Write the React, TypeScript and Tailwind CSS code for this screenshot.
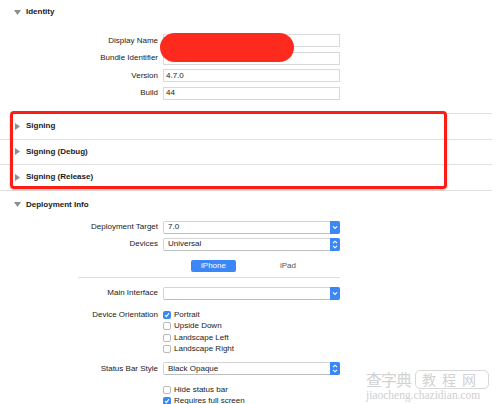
import type { ReactNode } from "react";

const font = { fontFamily: '"Liberation Sans", Arial, sans-serif' };

const Triangle = ({ open }: { open: boolean }) =>
  open ? (
    <svg width="7" height="5" viewBox="0 0 7 5" className="shrink-0">
      <path d="M0 0 L7 0 L3.5 5 Z" fill="#8e8e8e" />
    </svg>
  ) : (
    <svg width="5" height="7" viewBox="0 0 5 7" className="shrink-0">
      <path d="M0 0 L5 3.5 L0 7 Z" fill="#8e8e8e" />
    </svg>
  );

const SectionHeader = ({ title, open, className = "" }: { title: string; open: boolean; className?: string }) => (
  <div className={`flex items-center pl-[14px] gap-[5px] ${className}`}>
    <div className="w-[7px] flex justify-center">
      <Triangle open={open} />
    </div>
    <span className="font-bold text-[8px] text-[#1a1a1a]">{title}</span>
  </div>
);

const Row = ({ label, children, className = "" }: { label?: string; children: ReactNode; className?: string }) => (
  <div className={`flex items-center ${className}`}>
    <div className="w-[158px] text-right text-[8px] text-[#222] leading-none">{label}</div>
    <div className="ml-[5px] flex items-center">{children}</div>
  </div>
);

const TextField = ({ value }: { value: string }) => (
  <div className="w-[177px] h-[13px] border border-[#d9d9d9] bg-white flex items-center pl-[2px] text-[8px] text-[#222]">
    {value}
  </div>
);

const Popup = ({ value, stepper }: { value: string; stepper?: boolean }) => (
  <div className="w-[177px] h-[13px] border border-[#d4d4d4] border-b-[#bdbdbd] rounded-[2px] bg-white flex items-center text-[8px] text-[#222]">
    <span className="flex-1 pl-[4px]">{value}</span>
    <div className="w-[10px] h-[13px] -mr-px -my-px bg-[#3a87f5] rounded-r-[2px] flex items-center justify-center">
      {stepper ? (
        <svg width="6" height="9" viewBox="0 0 6 9">
          <path d="M1 3.2 L3 1.2 L5 3.2 M1 5.8 L3 7.8 L5 5.8" fill="none" stroke="white" strokeWidth="1.1" />
        </svg>
      ) : (
        <svg width="6" height="5" viewBox="0 0 6 5">
          <path d="M1 1.3 L3 3.3 L5 1.3" fill="none" stroke="white" strokeWidth="1.2" />
        </svg>
      )}
    </div>
  </div>
);

const Check = ({ label, checked }: { label: string; checked?: boolean }) => (
  <div className="h-[11.5px] flex items-center gap-[3px] text-[8px] text-[#222]">
    {checked ? (
      <div className="w-[8px] h-[8px] rounded-[2px] bg-[#3a87f5] flex items-center justify-center">
        <svg width="6" height="6" viewBox="0 0 6 6">
          <path d="M1 3.2 L2.4 4.6 L5 1.2" fill="none" stroke="white" strokeWidth="1.1" />
        </svg>
      </div>
    ) : (
      <div className="w-[8px] h-[8px] rounded-[2px] border border-[#b9b9b9] bg-white" />
    )}
    <span>{label}</span>
  </div>
);

export default function App() {
  return (
    <div className="relative w-[500px] h-[404px] bg-white overflow-hidden" style={font}>
      {/* Identity */}
      <SectionHeader title="Identity" open className="h-[24px]" />
      <div className="mt-[10px] flex flex-col gap-[4.5px]">
        <Row label="Display Name">
          <TextField value="" />
        </Row>
        <Row label="Bundle Identifier">
          <TextField value="" />
        </Row>
        <Row label="Version">
          <TextField value="4.7.0" />
        </Row>
        <Row label="Build">
          <TextField value="44" />
        </Row>
      </div>

      {/* Signing groups */}
      <div className="mt-[13.5px] ml-[13px] w-[479px] border-t border-[#e0e0e0]">
        {["Signing", "Signing (Debug)", "Signing (Release)"].map((t) => (
          <div key={t} className="h-[25.5px] border-b border-[#e0e0e0] flex items-center -ml-[13px]">
            <SectionHeader title={t} open={false} />
          </div>
        ))}
      </div>

      {/* Deployment Info */}
      <SectionHeader title="Deployment Info" open className="h-[28px]" />
      <div className="mt-[2px] flex flex-col gap-[4px]">
        <Row label="Deployment Target">
          <Popup value="7.0" />
        </Row>
        <Row label="Devices">
          <Popup value="Universal" stepper />
        </Row>
      </div>
      <div className="mt-[9px] flex items-center">
        <div className="ml-[191px] w-[45px] h-[12px] rounded-[2px] bg-[#3a87f5] text-white text-[8px] flex items-center justify-center">
          iPhone
        </div>
        <div className="ml-[44px] text-[8px] text-[#555]">iPad</div>
      </div>
      <div className="mt-[5px] ml-[78px] w-[262px] border-t border-[#dedede]" />
      <Row label="Main Interface" className="mt-[9px]">
        <Popup value="" />
      </Row>
      <div className="mt-[9.5px] flex">
        <div className="w-[158px] h-[11.5px] flex items-center justify-end text-[8px] text-[#222]">Device Orientation</div>
        <div className="ml-[5px] flex flex-col">
          <Check label="Portrait" checked />
          <Check label="Upside Down" />
          <Check label="Landscape Left" />
          <Check label="Landscape Right" />
        </div>
      </div>
      <Row label="Status Bar Style" className="mt-[7px]">
        <Popup value="Black Opaque" stepper />
      </Row>
      <div className="mt-[9px] ml-[163px] flex flex-col">
        <Check label="Hide status bar" />
        <Check label="Requires full screen" checked />
      </div>

      {/* redaction blob */}
      <div className="absolute left-[160px] top-[33px] w-[134px] h-[29px] rounded-full bg-[#fd2a1d]" />

      {/* annotation box */}
      <div className="absolute left-[10px] top-[111px] w-[437px] h-[78px] border-[3px] border-[#fb1e16] rounded-[4px] shadow-[0_1px_2px_rgba(0,0,0,0.25)]" />

      {/* watermark */}
      <div className="absolute left-[366px] top-[369px] w-[130px] flex flex-col items-start">
        <div className="flex items-center">
          <span className="text-[16px] leading-[20px] text-[#d2d2d2] tracking-[-1px]" style={{ fontFamily: '"Noto Sans CJK SC", sans-serif' }}>
            查字典
          </span>
          <span
            className="ml-[4px] h-[19px] px-[6px] border border-[#d8d8d8] rounded-[5px] text-[14px] leading-[17px] text-[#d2d2d2] tracking-[6px]"
            style={{ fontFamily: '"Noto Sans CJK SC", sans-serif' }}
          >
            教程网
          </span>
        </div>
        <span className="text-[11.5px] leading-[13px] text-[#cfcfcf]" style={{ fontFamily: '"Liberation Serif", serif' }}>
          jiaocheng.chazidian.com
        </span>
      </div>
    </div>
  );
}
